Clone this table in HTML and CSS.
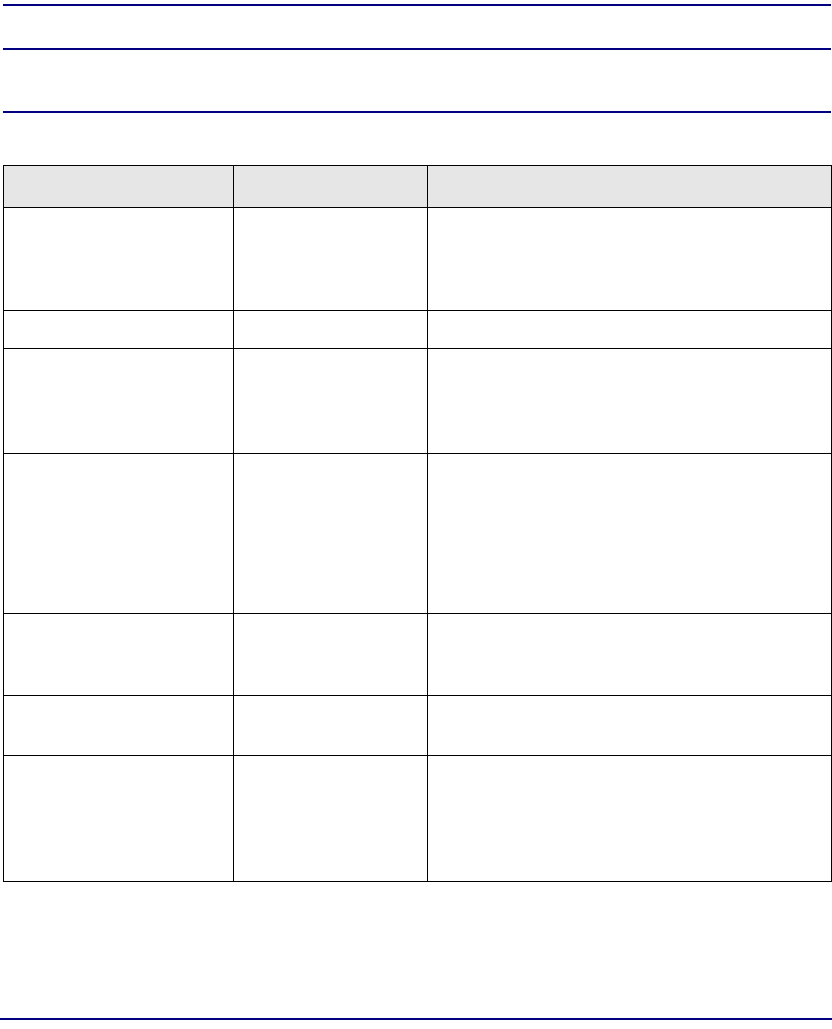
FILE: index.html
```html
<!DOCTYPE html>
<html>
<head>
<meta charset="utf-8">
<link rel="stylesheet" href="styles.css">
</head>
<body>
<div class="page">
  <div class="rule"></div>
  <div class="rule rule-2"></div>
  <div class="rule rule-3"></div>
  <table class="grid">
    <colgroup>
      <col class="c1"><col class="c2"><col class="c3">
    </colgroup>
    <thead>
      <tr class="h-head"><th></th><th></th><th></th></tr>
    </thead>
    <tbody>
      <tr class="h1"><td></td><td></td><td></td></tr>
      <tr class="h2"><td></td><td></td><td></td></tr>
      <tr class="h3"><td></td><td></td><td></td></tr>
      <tr class="h4"><td></td><td></td><td></td></tr>
      <tr class="h5"><td></td><td></td><td></td></tr>
      <tr class="h6"><td></td><td></td><td></td></tr>
      <tr class="h7"><td></td><td></td><td></td></tr>
    </tbody>
  </table>
</div>
<div class="footer-rule"></div>
</body>
</html>
```

FILE: styles.css
```css
html, body {
  margin: 0;
  padding: 0;
  background: #ffffff;
  font-family: "Liberation Sans", Arial, sans-serif;
}
.page {
  padding: 4px 1px 0 3px;
}
.rule {
  height: 2px;
  background: #000080;
}
.rule-2 {
  margin-top: 42px;
}
.rule-3 {
  margin-top: 61px;
}
.grid {
  margin-top: 52px;
  width: 828px;
  border-collapse: collapse;
  table-layout: fixed;
}
.c1 { width: 230px; }
.c2 { width: 194px; }
.c3 { width: 404px; }
.grid th, .grid td {
  border: 1px solid #000000;
  padding: 0;
}
.grid th {
  background: #e6e6e6;
}
.h-head { height: 42px; }
.h1 { height: 103px; }
.h2 { height: 38px; }
.h3 { height: 105px; }
.h4 { height: 160px; }
.h5 { height: 82px; }
.h6 { height: 60px; }
.h7 { height: 126px; }
.footer-rule {
  margin-top: 136px;
  height: 2px;
  background: #000080;
}
```
